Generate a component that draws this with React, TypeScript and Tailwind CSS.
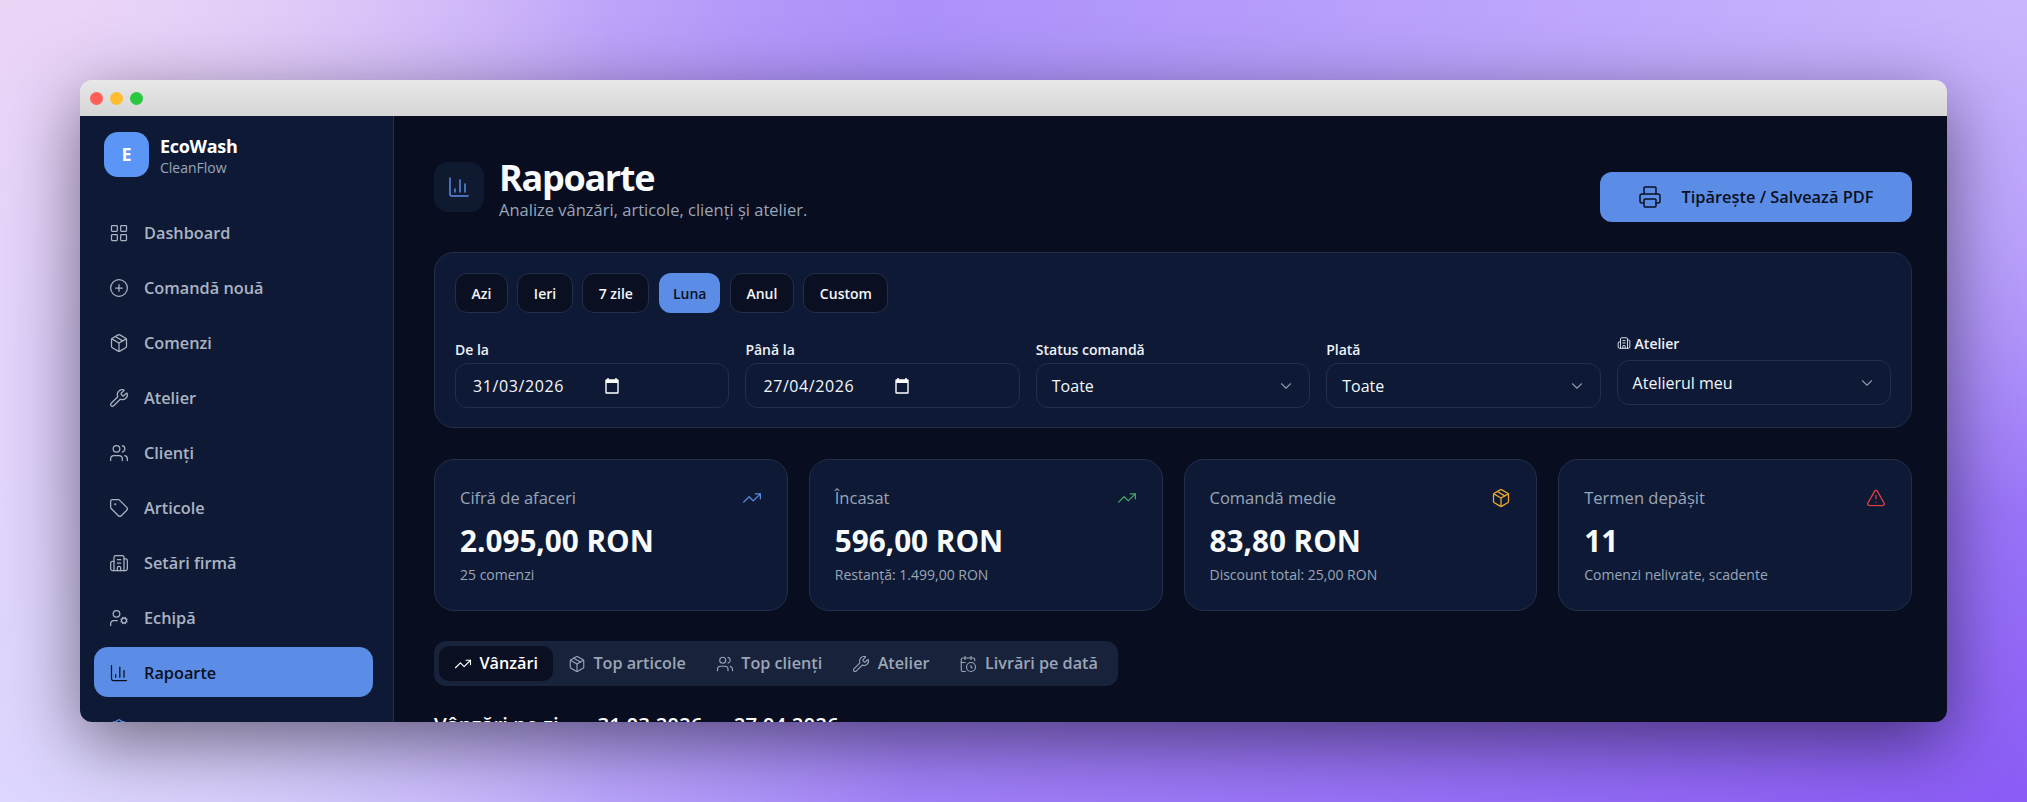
import { BarChart3, Building2, CalendarClock, ChevronDown, CirclePlus, LayoutGrid, Package, Printer, ShieldCheck, Tag, TrendingUp, TriangleAlert, UserCog, Users, Wrench } from "lucide-react";
import type { ComponentType } from "react";

type Icon = ComponentType<{ size?: number; strokeWidth?: number; className?: string }>;

const nav: { label: string; icon: Icon; active?: boolean; accent?: boolean }[] = [
  { label: "Dashboard", icon: LayoutGrid },
  { label: "Comandă nouă", icon: CirclePlus },
  { label: "Comenzi", icon: Package },
  { label: "Atelier", icon: Wrench },
  { label: "Clienți", icon: Users },
  { label: "Articole", icon: Tag },
  { label: "Setări firmă", icon: Building2 },
  { label: "Echipă", icon: UserCog },
  { label: "Rapoarte", icon: BarChart3, active: true },
  { label: "Super Admin", icon: ShieldCheck, accent: true },
];

const presets = ["Azi", "Ieri", "7 zile", "Luna", "Anul", "Custom"];

const stats: { title: string; value: string; sub: string; icon: Icon; color: string }[] = [
  { title: "Cifră de afaceri", value: "2.095,00 RON", sub: "25 comenzi", icon: TrendingUp, color: "text-[#5b8de6]" },
  { title: "Încasat", value: "596,00 RON", sub: "Restanță: 1.499,00 RON", icon: TrendingUp, color: "text-[#3fa866]" },
  { title: "Comandă medie", value: "83,80 RON", sub: "Discount total: 25,00 RON", icon: Package, color: "text-[#f0a92e]" },
  { title: "Termen depășit", value: "11", sub: "Comenzi nelivrate, scadente", icon: TriangleAlert, color: "text-[#e5403f]" },
];

const tabs: { label: string; icon: Icon; active?: boolean }[] = [
  { label: "Vânzări", icon: TrendingUp, active: true },
  { label: "Top articole", icon: Package },
  { label: "Top clienți", icon: Users },
  { label: "Atelier", icon: Wrench },
  { label: "Livrări pe dată", icon: CalendarClock },
];

function CalendarGlyph() {
  return (
    <svg width="16" height="17" viewBox="0 0 16 17" fill="none" className="text-white">
      <path d="M4 1v2M12 1v2" stroke="currentColor" strokeWidth="1.5" />
      <rect x="2" y="3" width="12" height="13" stroke="currentColor" strokeWidth="1.4" rx="0.5" />
      <rect x="2" y="3" width="12" height="3" fill="currentColor" />
    </svg>
  );
}

function DateField({ label, value }: { label: string; value: string }) {
  return (
    <div className="flex flex-col">
      <label className="mb-[3px] pt-[1px] text-[14px] leading-[20px] font-semibold text-[#eef2f8]">{label}</label>
      <div className="flex h-[45px] items-center rounded-[12px] border border-[#232e48] bg-[#0e1a35] pl-[17px] text-[16px] tracking-[0.6px] text-[#f4f6fa]">
        <span className="w-[131px]">{value}</span>
        <CalendarGlyph />
      </div>
    </div>
  );
}

function SelectField({ label, value }: { label: string; value: string }) {
  return (
    <div className="flex flex-col">
      <label className="mb-[3px] pt-[1px] text-[14px] leading-[20px] font-semibold text-[#eef2f8]">{label}</label>
      <div className="flex h-[45px] items-center justify-between rounded-[12px] border border-[#232e48] bg-[#0e1a35] pr-[14px] pl-[15px] text-[16px] text-[#f4f6fa]">
        <span>{value}</span>
        <ChevronDown size={18} strokeWidth={1.5} className="text-[#8c96a8]" />
      </div>
    </div>
  );
}

export default function App() {
  return (
    <div className="h-[802px] w-full overflow-hidden bg-[#a78bfa] bg-[radial-gradient(at_0%_0%,#ebd5f7_0%,transparent_32%),radial-gradient(at_100%_0%,#cab6fd_0%,transparent_45%),radial-gradient(at_0%_100%,#ddd6fe_0%,transparent_32%),radial-gradient(at_100%_100%,#8b5cf6_0%,transparent_50%),linear-gradient(to_right,#e3d5fb_0%,transparent_30%)] p-[80px] font-['Open_Sans',sans-serif]">
      <div className="flex h-[642px] flex-col overflow-hidden rounded-[12px] shadow-[0_20px_70px_rgba(0,0,0,0.5)]">
        <div className="flex h-[36px] shrink-0 items-center gap-[7px] bg-gradient-to-b from-[#e8e8e8] to-[#d6d6d6] pl-[10px]">
          <span className="size-[13px] rounded-full bg-[#ff5f57]" />
          <span className="size-[13px] rounded-full bg-[#febc2e]" />
          <span className="size-[13px] rounded-full bg-[#28c840]" />
        </div>

        <div className="flex min-h-0 flex-1">
          <aside className="flex w-[314px] shrink-0 flex-col border-r border-[#232e48] bg-[#0e1a35] pt-[16px] pr-[20px] pl-[14px]">
            <div className="flex items-center gap-[11px] px-[10px]">
              <div className="flex size-[45px] items-center justify-center rounded-[14px] bg-[#5b96f7] text-[18px] font-bold text-white">E</div>
              <div className="flex flex-col pt-[2px]">
                <span className="text-[18px] leading-[24px] font-bold tracking-[-0.3px] text-white">EcoWash</span>
                <span className="text-[14px] leading-[19px] text-[#9aa6b8]">CleanFlow</span>
              </div>
            </div>
            <nav className="mt-[30px] flex flex-col gap-[5px]">
              {nav.map(({ label, icon: I, active, accent }) => (
                <a
                  key={label}
                  className={`flex h-[50px] shrink-0 items-center gap-[15px] rounded-[14px] px-[15px] pt-[2px] text-[16.3px] font-semibold ${
                    active ? "bg-[#5b8de6] text-[#0a1022]" : accent ? "text-[#5b8de6]" : "text-[#aab3c2]"
                  }`}
                >
                  <I size={20} strokeWidth={1.5} />
                  {label}
                </a>
              ))}
            </nav>
          </aside>

          <main className="min-w-0 flex-1 bg-[#080e20] pt-[41px] pr-[35px] pl-[40px]">
            <header className="flex h-[65px] items-start justify-between">
              <div className="flex gap-[15px] pt-[5px]">
                <div className="flex size-[50px] shrink-0 items-center justify-center rounded-[14px] bg-[#0f1a30] text-[#5b8de6]">
                  <BarChart3 size={24} strokeWidth={1.5} />
                </div>
                <div className="-mt-[6px] flex flex-col">
                  <h1 className="text-[36px] leading-[44px] font-bold tracking-[-1.3px] text-[#f8fafc]">Rapoarte</h1>
                  <p className="-mt-[1px] text-[16.5px] leading-[22px] text-[#9aa6b8]">Analize vânzări, articole, clienți și atelier.</p>
                </div>
              </div>
              <button className="mt-[15px] flex h-[50px] w-[312px] items-center justify-center gap-[19px] rounded-[12px] bg-[#5b8de6] text-[16.4px] font-semibold text-[#0a1022]">
                <Printer size={24} strokeWidth={1.5} />
                Tipărește / Salvează PDF
              </button>
            </header>

            <section className="mt-[30px] h-[176px] rounded-[20px] border border-[#232e48] bg-[#0e1a35] p-[20px]">
              <div className="flex gap-[9.5px]">
                {presets.map((p) => (
                  <button
                    key={p}
                    className={`h-[40px] rounded-[12px] text-[14px] font-semibold ${
                      p === "Luna" ? "bg-[#5b8de6] px-[14px] font-medium text-[#0a1022]" : "border border-[#232e48] bg-[#0a1022] px-[15.5px] text-[#f4f6fa]"
                    }`}
                  >
                    {p}
                  </button>
                ))}
              </div>
              <div className="mt-[26px] grid grid-cols-5 items-start gap-[16px]">
                <DateField label="De la" value="31/03/2026" />
                <DateField label="Până la" value="27/04/2026" />
                <SelectField label="Status comandă" value="Toate" />
                <SelectField label="Plată" value="Toate" />
                <div className="-mt-[7px] flex flex-col">
                  <label className="mb-[6px] flex h-[22px] items-center gap-[4px] text-[14px] font-semibold text-[#eef2f8]">
                    <Building2 size={14} strokeWidth={1.5} />
                    Atelier
                  </label>
                  <div className="flex h-[45px] items-center justify-between rounded-[12px] border border-[#232e48] bg-[#0e1a35] pr-[14px] pl-[15px] text-[16px] text-[#f4f6fa]">
                    <span>Atelierul meu</span>
                    <ChevronDown size={18} strokeWidth={1.5} className="text-[#8c96a8]" />
                  </div>
                </div>
              </div>
            </section>

            <section className="mt-[31px] grid grid-cols-4 gap-[21px]">
              {stats.map(({ title, value, sub, icon: I, color }) => (
                <div key={title} className="flex h-[152px] flex-col rounded-[20px] border border-[#232e48] bg-[#0e1a35] px-[25px] pt-[26px]">
                  <div className="flex items-center justify-between">
                    <span className="text-[16.5px] leading-[24px] text-[#9aa6b8]">{title}</span>
                    <I size={20} strokeWidth={1.5} className={color} />
                  </div>
                  <div className="mt-[12px] text-[29.7px] leading-[38px] font-bold text-[#f8fafc]">{value}</div>
                  <div className="mt-[5px] text-[14px] leading-[20px] text-[#9aa6b8]">{sub}</div>
                </div>
              ))}
            </section>

            <div className="mt-[30px] flex h-[45px] w-fit items-center rounded-[12px] bg-[#18223a] p-[5px]">
              {tabs.map(({ label, icon: I, active }) => (
                <button
                  key={label}
                  className={`flex h-[35px] items-center gap-[7.5px] rounded-[10px] px-[15px] text-[16.2px] font-semibold ${
                    active ? "bg-[#0a1022] text-white" : "text-[#9aa6b8]"
                  }`}
                >
                  <I size={18} strokeWidth={1.5} />
                  {label}
                </button>
              ))}
            </div>

            <h2 className="mt-[24px] flex gap-[13px] text-[20.5px] leading-[28px] font-semibold text-[#f8fafc]">
              <span>Vânzări pe zi</span>
              <span>— 31.03.2026 — 27.04.2026</span>
            </h2>
          </main>
        </div>
      </div>
    </div>
  );
}
